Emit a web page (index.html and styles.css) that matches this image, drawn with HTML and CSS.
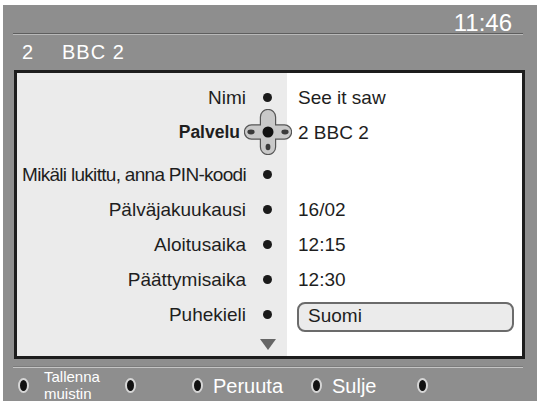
FILE: index.html
```html
<!DOCTYPE html>
<html lang="fi">
<head>
    <meta charset="UTF-8">
    <meta name="viewport" content="width=device-width, initial-scale=1.0">
    <title>Tallennus</title>
    <link rel="stylesheet" href="styles.css">
</head>
<body>

    <div class="screen">
        <div class="clock">11:46</div>
        <div class="rule"></div>
        <div class="channel"><span class="ch-num">2</span>BBC 2</div>

        <div class="panel">
            <div class="row">
                <span class="label">Nimi</span>
                <span class="mark"><span class="dot"></span></span>
                <span class="value">See it saw</span>
            </div>
            <div class="row active">
                <span class="label">Palvelu</span>
                <span class="mark">
                    <svg class="pad" width="48" height="46" viewBox="0 0 48 46">
                        <rect x="17" y="1" width="14" height="44" rx="7" fill="none" stroke="#555" stroke-width="2.4"/>
                        <rect x="1" y="16.5" width="46" height="13" rx="6.5" fill="none" stroke="#555" stroke-width="2.4"/>
                        <rect x="17" y="1" width="14" height="44" rx="7" fill="#c9c9c9"/>
                        <rect x="1" y="16.5" width="46" height="13" rx="6.5" fill="#c9c9c9"/>
                        <ellipse cx="7" cy="23" rx="3.6" ry="2.4" fill="#3a3a3a"/>
                        <ellipse cx="41" cy="23" rx="3.6" ry="2.4" fill="#3a3a3a"/>
                        <ellipse cx="24" cy="38" rx="2.4" ry="3.2" fill="#3a3a3a"/>
                        <circle cx="24" cy="23" r="5.5" fill="#111"/>
                    </svg>
                </span>
                <span class="value">2 BBC 2</span>
            </div>
            <div class="row gap">
                <span class="label narrow">Mikäli lukittu, anna PIN-koodi</span>
                <span class="mark"><span class="dot"></span></span>
                <span class="value"></span>
            </div>
            <div class="row">
                <span class="label">Pälväjakuukausi</span>
                <span class="mark"><span class="dot"></span></span>
                <span class="value">16/02</span>
            </div>
            <div class="row">
                <span class="label">Aloitusaika</span>
                <span class="mark"><span class="dot"></span></span>
                <span class="value">12:15</span>
            </div>
            <div class="row">
                <span class="label">Päättymisaika</span>
                <span class="mark"><span class="dot"></span></span>
                <span class="value">12:30</span>
            </div>
            <div class="row">
                <span class="label">Puhekieli</span>
                <span class="mark"><span class="dot"></span></span>
                <span class="value"><span class="field">Suomi</span></span>
            </div>
            <div class="more">
                <span class="arrow"></span>
            </div>
        </div>

        <div class="rule low"></div>

        <div class="keys">
            <div class="key"><span class="oval"></span><span class="key-text small">Tallenna<br>muistin</span></div>
            <div class="key"><span class="oval"></span></div>
            <div class="key"><span class="oval"></span><span class="key-text">Peruuta</span></div>
            <div class="key"><span class="oval"></span><span class="key-text">Sulje</span></div>
            <div class="key"><span class="oval"></span></div>
        </div>
    </div>

</body>
</html>
```

FILE: styles.css
```css
body {
    margin: 0;
    background: #fff;
    font-family: "Liberation Sans", Arial, sans-serif;
    overflow: hidden;
}

.screen {
    margin: 5px 0 0 3px;
    width: 534px;
    height: 396px;
    padding: 0 14px 0 10px;
    box-sizing: border-box;
    background: #8e8e8e;
    color: #fff;
    overflow: hidden;
}

.clock {
    height: 28px;
    padding: 8px 11px 0 0;
    box-sizing: border-box;
    font-size: 24px;
    line-height: 20px;
    text-align: right;
}

.rule {
    height: 1px;
    border-top: 1px solid #5e5e5e;
    background: #b9b9b9;
}

.rule.low {
    margin-top: 7px;
    border-top-color: #7c7c7c;
    background: #c4c4c4;
}

.channel {
    height: 35px;
    padding-left: 9px;
    font-size: 20px;
    line-height: 35px;
    letter-spacing: 1px;
}

.ch-num {
    display: inline-block;
    width: 40px;
}

/* main menu panel */
.panel {
    margin-left: 1px;
    width: 511px;
    height: 289px;
    box-sizing: border-box;
    padding-top: 7px;
    border: 3px solid #1d1d1d;
    background: linear-gradient(to right, #ebebeb 270px, #fff 270px);
    color: #1e1e1e;
    font-size: 19px;
}

.row {
    display: grid;
    grid-template-columns: 229px 41px 1fr;
    height: 35px;
    align-items: center;
}

.row.gap {
    margin-top: 7px;
}

.label {
    text-align: right;
    white-space: nowrap;
}

.label.narrow {
    letter-spacing: -0.7px;
}

.active .label {
    font-weight: bold;
    font-size: 17.5px;
    padding-right: 6px;
}

.mark {
    position: relative;
    height: 100%;
    display: flex;
    align-items: center;
    padding-left: 17px;
}

.dot {
    width: 9px;
    height: 9px;
    border-radius: 50%;
    background: #1a1a1a;
}

.pad {
    position: absolute;
    left: -2px;
    top: -6px;
}

.value {
    padding-left: 11px;
    white-space: nowrap;
}

.field {
    display: block;
    margin: 5px 0 0 -1px;
    width: 217px;
    height: 30px;
    box-sizing: border-box;
    padding-left: 9px;
    border: 2px solid #6b6b6b;
    border-radius: 8px;
    background: #ebebeb;
    line-height: 24px;
}

.more {
    display: flex;
    align-items: center;
    height: 24px;
    padding-left: 243px;
}

.arrow {
    width: 0;
    height: 0;
    border-left: 8px solid transparent;
    border-right: 8px solid transparent;
    border-top: 11px solid #666;
}

/* colour key bar */
.keys {
    display: grid;
    grid-template-columns: 107px 67px 119px 106px auto;
    height: 33px;
    padding-left: 4px;
    align-items: center;
}

.key {
    display: flex;
    align-items: center;
}

.oval {
    flex: none;
    width: 7px;
    height: 11px;
    border-radius: 50%;
    background: #111;
    border: 2px solid #d6d6d6;
    margin-left: 1px;
}

.key-text {
    margin-left: 10px;
    font-size: 20px;
    line-height: 20px;
}

.key-text.small {
    margin-left: 15px;
    font-size: 15px;
    line-height: 17px;
    padding-bottom: 1px;
}
```
